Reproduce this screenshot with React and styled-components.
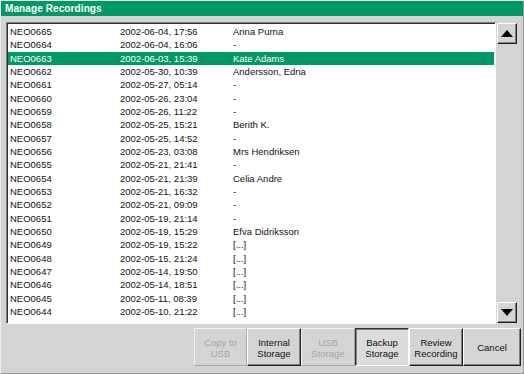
import React from "react";
import styled, { createGlobalStyle, css } from "styled-components";

const Global = createGlobalStyle`
  html, body { margin: 0; padding: 0; background: #d4d4d4; }
  body { font-family: "Liberation Sans", Arial, sans-serif; }
`;

const Window = styled.div`
  width: 524px;
  height: 374px;
  box-sizing: border-box;
  background: #d4d4d4;
  border: 1px solid;
  border-color: #ececec #9a9a9a #9a9a9a #ececec;
  display: flex;
  flex-direction: column;
`;

const TitleBar = styled.div`
  height: 15px;
  background: #009966;
  color: #ffffff;
  font-weight: bold;
  font-size: 10px;
  line-height: 15px;
  padding-left: 4px;
  letter-spacing: 0.1px;
`;

const Body = styled.div`
  flex: 1;
  display: flex;
  flex-direction: column;
  padding: 6px 2px 0 5px;
`;

const ListArea = styled.div`
  display: flex;
  gap: 1px;
  height: 302px;
`;

const ListBox = styled.div`
  width: 490px;
  box-sizing: border-box;
  background: #ffffff;
  border: 1px solid;
  border-color: #808080 #ffffff #ffffff #808080;
  box-shadow: inset 1px 1px 0 #303030;
  padding: 2px 1px 0 1px;
  overflow: hidden;
`;

const Row = styled.div`
  display: grid;
  grid-template-columns: 110px 113px 1fr;
  height: 13.33px;
  line-height: 13.33px;
  padding-left: 2px;
  font-size: 9.5px;
  color: #111;
  white-space: nowrap;
  ${(p) =>
    p.$selected &&
    css`
      background: #009966;
      color: #ffffff;
    `}
`;

const ScrollColumn = styled.div`
  width: 20px;
  display: flex;
  flex-direction: column;
  justify-content: space-between;
  padding: 1px 0 1px 0;
`;

const ScrollButton = styled.div`
  width: 20px;
  height: 21px;
  box-sizing: border-box;
  background: #d4d4d4;
  border: 1px solid;
  border-color: #ffffff #202020 #202020 #ffffff;
  box-shadow: inset -1px -1px 0 #808080;
  display: flex;
  align-items: center;
  justify-content: center;
`;

const Buttons = styled.div`
  display: flex;
  justify-content: flex-end;
  margin-top: 4px;
`;

const Button = styled.div`
  width: ${(p) => p.$w || 54}px;
  height: 38px;
  box-sizing: border-box;
  background: #d4d4d4;
  border: 1px solid;
  border-color: #ffffff #202020 #202020 #ffffff;
  box-shadow: inset -1px -1px 0 #808080;
  display: flex;
  align-items: center;
  justify-content: center;
  text-align: center;
  font-size: 9.5px;
  line-height: 11px;
  color: #111;
  padding-top: 1px;
  ${(p) =>
    p.$disabled &&
    css`
      color: #a6a6a6;
      border-color: #f2f2f2 #a8a8a8 #a8a8a8 #f2f2f2;
      box-shadow: none;
    `}
  ${(p) =>
    p.$pressed &&
    css`
      background: #dcdcdc;
      border-color: #303030 #ffffff #ffffff #303030;
      box-shadow: inset 1px 1px 0 #808080;
    `}
`;

const Arrow = ({ up }) => (
  <svg width="12" height="7" viewBox="0 0 12 7">
    {up ? <polygon points="0,7 12,7 6,0" fill="#000" /> : <polygon points="0,0 12,0 6,7" fill="#000" />}
  </svg>
);

const rows = [
  ["NEO0665", "2002-06-04, 17:56", "Anna Purna"],
  ["NEO0664", "2002-06-04, 16:06", "-"],
  ["NEO0663", "2002-06-03, 15:39", "Kate Adams"],
  ["NEO0662", "2002-05-30, 10:39", "Andersson, Edna"],
  ["NEO0661", "2002-05-27, 05:14", "-"],
  ["NEO0660", "2002-05-26, 23:04", "-"],
  ["NEO0659", "2002-05-26, 11:22", "-"],
  ["NEO0658", "2002-05-25, 15:21", "Berith K."],
  ["NEO0657", "2002-05-25, 14:52", "-"],
  ["NEO0656", "2002-05-23, 03:08", "Mrs Hendriksen"],
  ["NEO0655", "2002-05-21, 21:41", "-"],
  ["NEO0654", "2002-05-21, 21:39", "Celia Andre"],
  ["NEO0653", "2002-05-21, 16:32", "-"],
  ["NEO0652", "2002-05-21, 09:09", "-"],
  ["NEO0651", "2002-05-19, 21:14", "-"],
  ["NEO0650", "2002-05-19, 15:29", "Efva Didriksson"],
  ["NEO0649", "2002-05-19, 15:22", "[...]"],
  ["NEO0648", "2002-05-15, 21:24", "[...]"],
  ["NEO0647", "2002-05-14, 19:50", "[...]"],
  ["NEO0646", "2002-05-14, 18:51", "[...]"],
  ["NEO0645", "2002-05-11, 08:39", "[...]"],
  ["NEO0644", "2002-05-10, 21:22", "[...]"],
];

export default function App() {
  return (
    <>
      <Global />
      <Window>
        <TitleBar>Manage Recordings</TitleBar>
        <Body>
          <ListArea>
            <ListBox>
              {rows.map((r, i) => (
                <Row key={r[0]} $selected={i === 2}>
                  <span>{r[0]}</span>
                  <span>{r[1]}</span>
                  <span>{r[2]}</span>
                </Row>
              ))}
            </ListBox>
            <ScrollColumn>
              <ScrollButton>
                <Arrow up />
              </ScrollButton>
              <ScrollButton>
                <Arrow />
              </ScrollButton>
            </ScrollColumn>
          </ListArea>
          <Buttons>
            <Button $w={53} $disabled>
              Copy to
              <br />
              USB
            </Button>
            <Button>
              Internal
              <br />
              Storage
            </Button>
            <Button $disabled>
              USB
              <br />
              Storage
            </Button>
            <Button $pressed>
              Backup
              <br />
              Storage
            </Button>
            <Button>
              Review
              <br />
              Recording
            </Button>
            <Button $w={58}>Cancel</Button>
          </Buttons>
        </Body>
      </Window>
    </>
  );
}
